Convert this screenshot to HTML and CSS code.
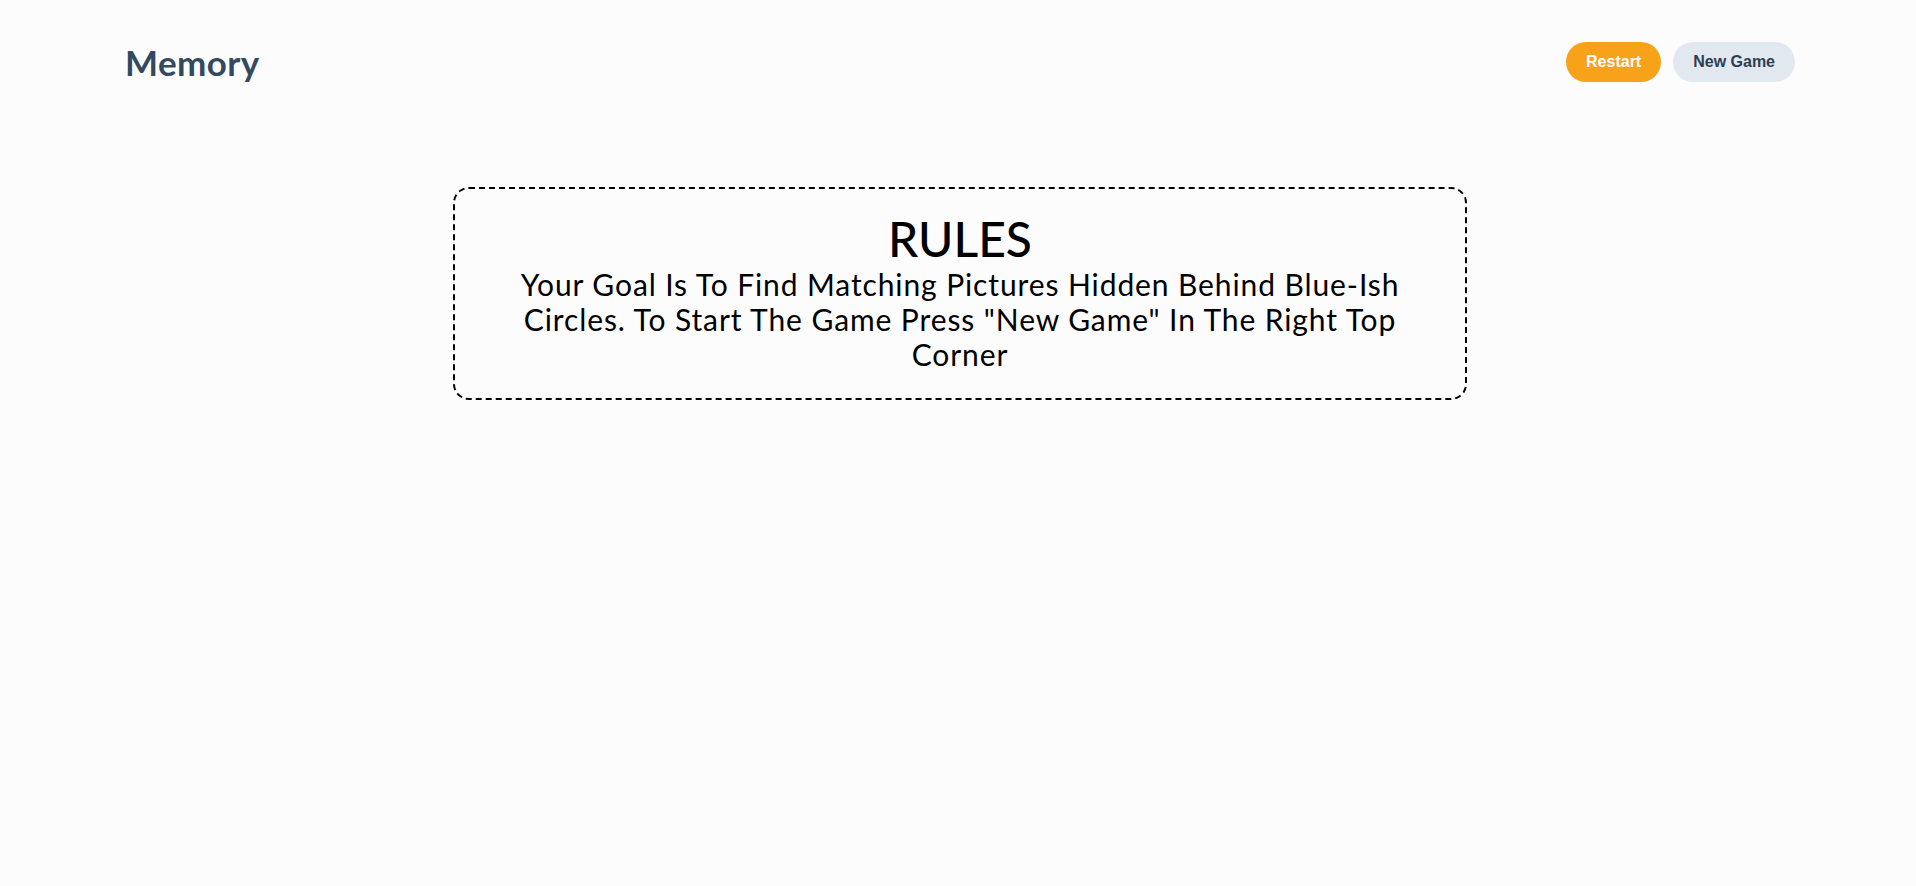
FILE: index.html
```html
<!DOCTYPE html>
<html lang="en">
<head>
<meta charset="utf-8">
<title>Memory</title>
<link rel="stylesheet" href="styles.css">
</head>
<body>
<header class="topbar">
  <div class="logo">Memory</div>
  <nav class="actions">
    <button class="btn btn-restart">Restart</button>
    <button class="btn btn-new">New Game</button>
  </nav>
</header>
<main class="content">
  <section class="rules">
    <h1 class="rules-title">RULES</h1>
    <p class="rules-text">Your Goal Is To Find Matching Pictures Hidden Behind Blue-Ish Circles. To Start The Game Press "New Game" In The Right Top Corner</p>
  </section>
</main>
</body>
</html>
```

FILE: styles.css
```css
html, body {
  margin: 0;
  padding: 0;
}
body {
  background: #fcfcfc;
  font-family: "Lato", "Noto Sans", "Liberation Sans", sans-serif;
  color: #000;
  min-height: 886px;
}
.topbar {
  display: flex;
  justify-content: space-between;
  align-items: center;
  padding: 42px 121px 0 125px;
}
.logo {
  font-size: 35px;
  line-height: 40px;
  font-weight: 700;
  color: #34495e;
  letter-spacing: 0.4px;
}
.actions {
  display: flex;
  gap: 12px;
}
.btn {
  height: 40px;
  padding: 0 20px;
  border: none;
  border-radius: 999px;
  font-family: "Liberation Sans", Arial, sans-serif;
  font-weight: 700;
  font-size: 16px;
  line-height: 40px;
  cursor: pointer;
}
.btn-restart {
  background: #f8a21a;
  color: #fff;
}
.btn-new {
  background: #e2e8f0;
  color: #2d3e50;
}
.content {
  display: flex;
  justify-content: center;
  padding: 105px 0 0 4px;
}
.rules {
  width: 1014px;
  box-sizing: border-box;
  border: 2px dashed #000;
  border-radius: 16px;
  padding: 22px 48px 26px;
  text-align: center;
}
.rules-title {
  margin: 0;
  font-size: 48px;
  line-height: 56px;
  font-weight: 500;
}
.rules-text {
  margin: 0;
  font-size: 30px;
  line-height: 35px;
  font-weight: 400;
  letter-spacing: 0.9px;
}
```
